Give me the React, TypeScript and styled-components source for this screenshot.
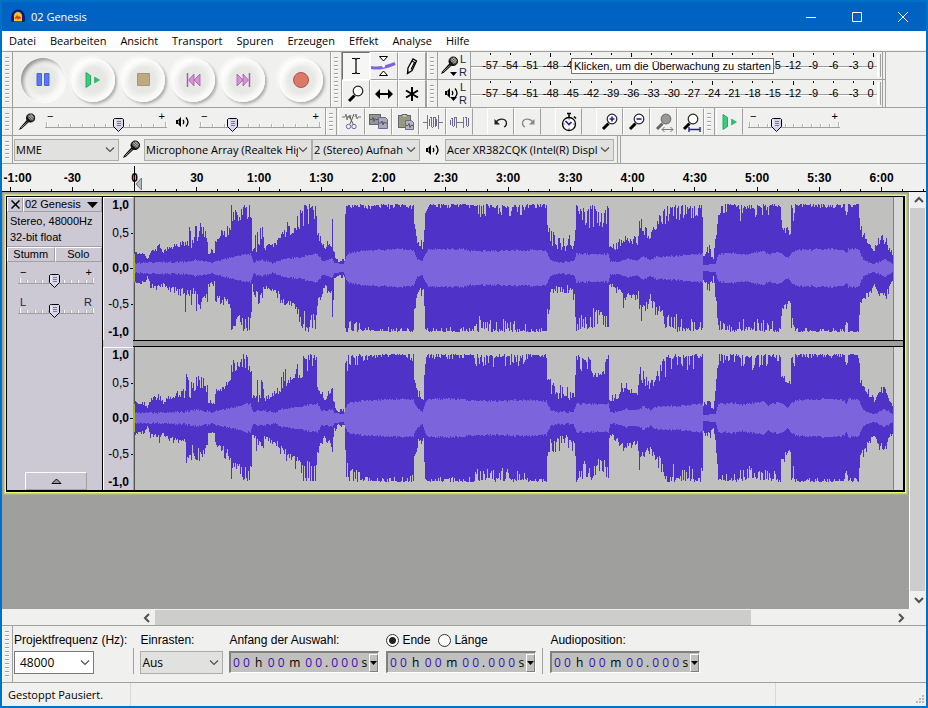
import React, { useState } from "react";
import styled, { createGlobalStyle, css } from "styled-components";

const ui = `"Open Sans", "Noto Sans", sans-serif`;
const arial = `"Liberation Sans", Arial, sans-serif`;
const line = "#a0a0a0";
const face = "#f0f0ee";
const panelTint = "#ccc8d4";

const GlobalStyle = createGlobalStyle`
  *, *::before, *::after { box-sizing: border-box; }
  body { margin: 0; background: #0072c6; }
  button, input, select { font: inherit; color: inherit; margin: 0; padding: 0; border: 0; border-radius: 0; background: none; }
  svg { display: block; flex: none; }
`;

/* ---------- window frame ---------- */

const Window = styled.div`
  display: flex;
  flex-direction: column;
  min-height: 100vh;
  border: solid #0072c6;
  border-width: 0 2px 2px;
  background: ${face};
  font: 12px/16px ${arial};
  color: #000;
  overflow: hidden;
`;

const TitleBar = styled.header`
  display: flex;
  align-items: center;
  height: 31px;
  padding-left: 9px;
  border-top: 2px solid #0072c6;
  background: #0063c3;
  color: #fff;
  font: 11px/16px ${ui};
`;

const Title = styled.h1`
  flex: 1;
  margin: 0 0 0 6px;
  font: inherit;
`;

const CaptionButton = styled.button`
  display: grid;
  place-items: center;
  width: 46px;
  height: 29px;
`;

const MenuBar = styled.nav`
  display: flex;
  gap: 14px;
  height: 20px;
  padding-left: 7px;
  background: #fff;
  border-bottom: 1px solid ${face};
  font: 11px/20px ${ui};
`;

/* ---------- toolbars ---------- */

const Dock = styled.div`
  display: flex;
  flex-direction: column;
`;

const DockRow = styled.div<{ $height: number }>`
  display: flex;
  height: ${(p) => p.$height}px;
  border-bottom: 1px solid ${line};
`;

const TopLine = styled.div`
  height: 1px;
  background: ${line};
`;

const Grip = styled.div`
  flex: none;
  width: 11px;
  border-right: 1px solid ${line};
  border-left: 1px solid #fff;
  padding: 5px 3px 4px 2px;
  background: repeating-linear-gradient(${line} 0 1px, #fff 1px 2px, transparent 2px 4px) content-box;
`;

const ToolbarEnd = styled.div`
  flex: none;
  width: 4px;
  border: solid ${line};
  border-width: 0 1px;
`;

const Transport = styled.div`
  display: flex;
  align-items: center;
  padding: 0 4px 0 5px;
  border-right: 1px solid ${line};
`;

const RoundButton = styled.button<{ $pressed?: boolean; $apart?: boolean }>`
  display: grid;
  place-items: center;
  width: 44px;
  height: 44px;
  margin: 0 3px;
  margin-left: ${(p) => (p.$apart ? 11 : 3)}px;
  border-radius: 50%;
  background: radial-gradient(circle at 50% 50%, #e7e7e5 0 12px, #f0f0ee 17px);
  ${(p) =>
    p.$pressed
      ? css`box-shadow: inset 3px 3px 4px -1px #8e8e8c, inset -4px -4px 4px #fafaf8, 1px 1px 2px #fff;`
      : css`box-shadow: inset 4px 4px 4px #fdfdfb, inset -3px -3px 4px #fcfcfa, 2px 2px 3px #acacaa, -2px -2px 3px #fafaf8;`}
`;

const ToolGrid = styled.div`
  display: grid;
  grid-template-columns: repeat(3, 28px);
  grid-auto-rows: 28px;
  border-right: 1px solid ${line};
`;

const ToolButton = styled.button<{ $active?: boolean }>`
  display: grid;
  place-items: center;
  border: 1px solid;
  border-color: ${(p) => (p.$active ? "#707070 #fff #fff #707070" : `#fff ${line} ${line} #fff`)};
  background: ${(p) => (p.$active ? "#f6f6f4" : face)};
`;

const Meters = styled.div`
  display: flex;
  flex-direction: column;
  flex: 1;
  min-width: 0;
  margin-right: 40px;
`;

const MeterRow = styled.div`
  position: relative;
  display: flex;
  height: 28px;
  & + & { border-top: 1px solid ${line}; }
`;

const MeterButton = styled.button`
  display: flex;
  align-items: center;
  width: 32px;
  padding-left: 1px;
`;

const ChannelNames = styled.span`
  display: flex;
  flex-direction: column;
  font: 11px/13px ${arial};
  color: #20283c;
`;

const Scale = styled.div`
  position: relative;
  display: flex;
  flex: 1;
  min-width: 0;
  padding-left: 9px;
  border-left: 1px solid ${line};
  background: linear-gradient(${line} 0 1px, #fff 1px 2px) 0 14px / 100% 2px no-repeat;
`;

const ScaleCells = styled.div`
  display: flex;
  flex: 1;
  min-width: 0;
  margin-right: -7px;
`;

const ScaleCell = styled.div`
  display: flex;
  flex: 1 1 0;
  min-width: 0;
  flex-direction: column;
  align-items: center;
  font: 11px/17px ${arial};
  white-space: nowrap;
  &:last-child span { padding-right: 7px; }
`;

const ScaleTick = styled.i<{ $long: boolean }>`
  width: 1px;
  height: ${(p) => (p.$long ? 4 : 2)}px;
  margin: ${(p) => (p.$long ? "1px 0 0" : "1px 0 2px")};
  background: #000;
`;

const MeterCap = styled.div`
  flex: none;
  width: 5px;
  margin: 2px 0;
  border-left: 2px solid #fff;
  background: linear-gradient(${line}, ${line}) 1px 0 / 1px 100% no-repeat;
`;

const MeterIcon = styled.span`
  display: flex;
  flex-direction: column;
  align-items: end;
  width: 20px;
  svg + svg { margin: -3px 2px 0 0; }
`;

const Tooltip = styled.div`
  position: absolute;
  top: 6px;
  left: 100px;
  height: 16px;
  padding: 0 2px;
  border: 1px solid #767676;
  background: #fff;
  font: 11px/14px ${arial};
  white-space: nowrap;
`;

const Mixer = styled.div`
  display: flex;
  align-items: center;
  gap: 9px;
  padding: 0 4px 0 5px;
  border-right: 1px solid ${line};
`;

const ButtonStrip = styled.div`
  display: flex;
  padding-left: 1px;
`;

const EditButton = styled.button<{ $apart?: boolean }>`
  display: grid;
  place-items: center;
  width: 27px;
  height: 27px;
  margin-left: ${(p) => (p.$apart ? 14 : 0)}px;
  border: 1px solid;
  border-color: #fff ${line} transparent #fff;
`;

const Speed = styled.div`
  display: flex;
  align-items: center;
  padding-left: 5px;
`;

/* ---------- sliders ---------- */

const knob = `url("data:image/svg+xml,%3Csvg xmlns='http://www.w3.org/2000/svg' width='12' height='14'%3E%3Cpath d='M2.5.5h7l1 1v7l-5 5-5-5v-7l1-1z' fill='%23d8d4ea' stroke='%23000'/%3E%3Cpath d='M2 2v6' stroke='%23fff'/%3E%3Cpath d='M4 3.500h4M4 5.500h4M4 7.500h4' stroke='%23807c98'/%3E%3C/svg%3E")`;

const SliderBox = styled.div<{ $width: number }>`
  display: grid;
  width: ${(p) => p.$width}px;
  height: 22px;
  > * { grid-area: 1 / 1; }
`;

const SliderEnds = styled.span<{ $color: string }>`
  display: flex;
  justify-content: space-between;
  height: 11px;
  padding: 0 2px;
  font: 11px/10px ${arial};
  color: ${(p) => p.$color};
`;

const TickRow = styled.span`
  display: flex;
  align-items: end;
  align-self: end;
  justify-content: space-between;
  height: 7px;
  margin-bottom: 5px;
  padding: 0 1px;
  border-bottom: 1px solid ${line};
  i { width: 1px; height: 3px; background: #b4b4b4; box-shadow: 1px 0 #fff; }
  i:first-child, i:last-child { height: 5px; }
`;

const Range = styled.input`
  align-self: end;
  width: 100%;
  height: 14px;
  margin-bottom: 1px;
  appearance: none;
  &::-webkit-slider-thumb {
    appearance: none;
    width: 12px;
    height: 14px;
    background: ${knob} no-repeat;
  }
`;

type SliderProps = { label: string; width: number; value: number; ends?: [string, string]; color?: string };

function Slider({ label, width, value, ends = ["−", "+"], color = "#000" }: SliderProps) {
  return (
    <SliderBox $width={width}>
      <SliderEnds $color={color}>
        <span>{ends[0]}</span>
        <span>{ends[1]}</span>
      </SliderEnds>
      <TickRow aria-hidden>
        {Array.from({ length: 11 }, (_, i) => <i key={i} />)}
      </TickRow>
      <Range type="range" aria-label={label} defaultValue={value} />
    </SliderBox>
  );
}

/* ---------- drop-downs ---------- */

const SelectBox = styled.div<{ $width: number; $large?: boolean; $white?: boolean }>`
  display: grid;
  align-items: center;
  flex: none;
  width: ${(p) => p.$width}px;
  height: ${(p) => (p.$large ? 23 : 22)}px;
  border: 1px solid ${(p) => (p.$white ? "#7a7a7a" : "#adadad")};
  background: ${(p) => (p.$white ? "#fff" : "#e1e1e0")};
  font: ${(p) => (p.$large ? 12 : 11)}px/16px ${ui};
  > * { grid-area: 1 / 1; }
  > svg { justify-self: end; margin-right: 3px; pointer-events: none; }
`;

const Select = styled.select`
  appearance: none;
  width: calc(100% - 13px);
  height: 100%;
  padding-left: 1px;
  outline: 0;
  overflow: hidden;
`;

const ComboInput = styled.input`
  width: calc(100% - 20px);
  padding-left: 5px;
`;

const Chevron = ({ d = "M1 2.500l4 4 4-4" }) => (
  <svg width="10" height="10" viewBox="0 0 10 10" fill="none" stroke="#505050" strokeWidth="1.2"><path d={d} /></svg>
);

const ScrollChevron = ({ d }: { d: string }) => (
  <svg width="10" height="10" viewBox="0 0 10 10" fill="none" stroke="#505050" strokeWidth="2"><path d={d} /></svg>
);

function Drop({ label, value, width, large, id }: { label?: string; value: string; width: number; large?: boolean; id?: string }) {
  return (
    <SelectBox $width={width} $large={large}>
      <Select id={id} aria-label={label} defaultValue={value}>
        <option>{value}</option>
      </Select>
      <Chevron />
    </SelectBox>
  );
}

const Devices = styled.div`
  display: flex;
  align-items: center;
  padding: 0 3px 0 1px;
`;

const DeviceIcon = styled.span<{ $width: number }>`
  display: grid;
  place-items: center;
  width: ${(p) => p.$width}px;
`;

/* ---------- timeline ---------- */

const Timeline = styled.div`
  position: relative;
  height: 28px;
  border-bottom: 1px solid #000;
  overflow: hidden;
`;

const TimelineCells = styled.div`
  display: flex;
  height: 100%;
  margin: 0 -49px 0 -23px;
`;

const TimelineCell = styled.div`
  display: grid;
  flex: 1 1 0;
  grid-template: 22px 5px / repeat(3, 1fr);
  justify-items: center;
  align-items: end;
  b { grid-column: 1 / 4; font: bold 12px/16px ${arial}; }
  &:first-child b { padding-left: 15px; }
  i { width: 1px; height: 2px; background: #000; }
  i:nth-of-type(2) { height: 4px; }
`;

const PlayHead = styled.svg`
  position: absolute;
  left: 132px;
  top: 2px;
`;

/* ---------- tracks ---------- */

const Workspace = styled.main`
  display: flex;
  flex: 1;
`;

const TrackPanel = styled.div`
  flex: 1;
  min-width: 0;
  padding: 4px;
  background: #9f9f9d;
`;

const Track = styled.section`
  display: flex;
  border: solid #000;
  border-width: 1px 2px 2px 1px;
  box-shadow: 0 0 0 1px #e6fd70, 0 0 0 2px #c6cf84, 0 0 0 3px #adb08e;
`;

const TrackControls = styled.div`
  display: flex;
  flex-direction: column;
  flex: none;
  width: 96px;
  border-right: 1px solid #000;
  background: ${panelTint};
`;

const ControlRow = styled.div`
  display: flex;
`;

const PanelButton = styled.button<{ $width?: number }>`
  display: flex;
  align-items: center;
  justify-content: center;
  flex: ${(p) => (p.$width ? `0 0 ${p.$width}px` : "1")};
  height: 15px;
  border: 1px solid;
  border-color: #fff ${line} ${line} #fff;
  font: 11px/13px ${arial};
  white-space: nowrap;
`;

const TrackName = styled(PanelButton)`
  justify-content: space-between;
  padding: 0 3px 0 1px;
`;

const TrackInfo = styled.p`
  margin: 0;
  padding: 1px 3px;
  font: 11px/16px ${arial};
  border-bottom: 1px solid ${line};
`;

const TrackSliders = styled.div`
  display: flex;
  flex-direction: column;
  gap: 8px;
  flex: 1;
  padding: 5px 0 0 11px;
`;

const CollapseButton = styled(PanelButton)`
  flex: 0 0 18px;
  width: 62px;
  margin: 0 auto 0 18px;
`;

const Channels = styled.div`
  display: flex;
  flex: 1;
  min-width: 0;
  flex-direction: column;
`;

const Channel = styled.div`
  display: flex;
  height: 143px;
`;

const ChannelGap = styled.div`
  height: 7px;
  margin-left: 30px;
  border: solid #000;
  border-width: 1px 0;
  background: #9f9f9d;
`;

const ChannelStack = styled.div`
  display: flex;
  flex-direction: column;
  background: ${panelTint};
`;

const VRuler = styled.div`
  display: grid;
  grid-template-rows: 20px 30px 40px 32px 19px;
  flex: none;
  width: 31px;
  border: solid #fff;
  border-width: 1px 0 0 1px;
  border-right: 1px solid ${line};
`;

const VMark = styled.div<{ $place: string; $bold: boolean; $tick: number }>`
  display: flex;
  align-items: center;
  align-self: ${(p) => p.$place};
  justify-content: flex-end;
  gap: 1px;
  height: 14px;
  font: ${(p) => (p.$bold ? "bold" : "normal")} 12px/14px ${arial};
  &::after { content: ""; width: ${(p) => p.$tick}px; height: 1px; margin-left: ${(p) => 3 - p.$tick}px; background: #000; }
`;

const Lane = styled.div`
  flex: 1;
  min-width: 0;
  border-left: 1px solid;
  border-image: linear-gradient(#555 0 57px, #a4b820 57px 85px, #555 85px) 1;
  background: #c0c0be;
`;

const WaveSvg = styled.svg`
  width: 100%;
  height: 143px;
`;

const LaneTail = styled.div`
  flex: none;
  width: 10px;
  border-left: 1px solid #808080;
  background: #d8d8d8;
`;

/* Envelope key points: column, lowest peak, highest peak. */
const peaks: number[][] = [
  [0, 14, 17], [9, 13, 16], [12, 7, 10], [15, 15, 20], [24, 17, 25], [28, 14, 17], [34, 18, 24], [46, 20, 28], [48, 20, 29],
  [49, 20, 46], [58, 18, 42], [64, 30, 48], [70, 26, 38], [72, 22, 36], [73, 14, 20], [79, 13, 18], [80, 24, 34], [92, 30, 43],
  [95, 38, 46], [96, 44, 64], [104, 46, 53], [107, 46, 64], [114, 48, 64], [116, 42, 52], [117, 16, 20], [122, 16, 42],
  [127, 18, 42], [129, 16, 21], [135, 20, 26], [144, 23, 32], [148, 30, 52], [155, 32, 42], [162, 38, 55], [169, 40, 64],
  [181, 44, 64], [182, 30, 38], [186, 22, 30], [189, 16, 22], [194, 22, 30], [196, 20, 30], [197, 24, 50], [199, 10, 16],
  [202, 6, 9], [209, 6, 10], [210, 30, 64], [213, 46, 64], [224, 52, 64], [230, 58, 63], [245, 59, 64], [272, 59, 64], [278, 56, 64],
  [279, 38, 44], [283, 20, 28], [288, 18, 28], [290, 50, 62], [292, 59, 64], [338, 59, 64], [342, 48, 64], [388, 52, 64],
  [394, 60, 64], [411, 60, 64], [412, 38, 50], [415, 20, 40], [420, 18, 34], [433, 16, 34], [439, 20, 34], [441, 54, 64],
  [450, 40, 60], [458, 38, 64], [465, 40, 54], [473, 44, 64], [474, 15, 22], [482, 18, 26], [489, 26, 44], [494, 24, 30],
  [503, 22, 34], [504, 36, 58], [510, 32, 44], [515, 26, 36], [520, 36, 48], [528, 38, 60], [532, 44, 64], [567, 48, 64],
  [568, 11, 14], [573, 14, 26], [578, 8, 13], [580, 20, 30], [583, 52, 64], [597, 58, 64], [605, 46, 64], [618, 48, 63],
  [630, 52, 64], [645, 52, 64], [646, 40, 48], [653, 30, 40], [655, 34, 38], [656, 58, 64], [658, 40, 60], [660, 60, 64],
  [709, 60, 64], [711, 50, 56], [713, 60, 64], [723, 59, 64], [725, 34, 46], [733, 22, 30], [739, 16, 20], [743, 24, 32],
  [750, 24, 34], [754, 16, 24], [758, 10, 13],
];

/* Inner level: column, height. */
const levels: number[][] = [
  [0, 5], [48, 6], [60, 8], [72, 7], [76, 5], [80, 7], [95, 10], [110, 14], [115, 14], [118, 6], [127, 8], [138, 5], [148, 9],
  [165, 11], [178, 14], [182, 14], [187, 7], [197, 9], [199, 5], [208, 4], [212, 14], [222, 17], [262, 19], [278, 18], [282, 9],
  [287, 7], [290, 14], [293, 19], [328, 19], [335, 17], [362, 17], [385, 18], [397, 18], [411, 17], [415, 8], [423, 6], [438, 6],
  [441, 14], [473, 14], [475, 6], [482, 6], [490, 9], [503, 8], [508, 12], [515, 8], [520, 11], [540, 12], [567, 14], [568, 3],
  [580, 4], [583, 14], [600, 15], [607, 13], [628, 17], [633, 13], [643, 16], [653, 10], [655, 13], [660, 18], [697, 19],
  [708, 18], [711, 14], [713, 19], [723, 19], [728, 8], [738, 4], [750, 9], [758, 3],
];

const laneWidth = 758;
const laneMiddle = 71;

function sample(keys: number[][], x: number, field: number) {
  let i = 1;
  while (i < keys.length - 1 && keys[i][0] < x) i++;
  const a = keys[i - 1];
  const b = keys[i];
  const t = Math.min(1, Math.max(0, (x - a[0]) / (b[0] - a[0])));
  return a[field] + (b[field] - a[field]) * t;
}

function buildWave(seed: number) {
  let state = seed;
  const random = () => {
    state = (state * 1664525 + 1013904223) % 4294967296;
    return state / 4294967296;
  };
  /* Saturated passages stay near the ceiling with rare dips; others stay low with rare spikes. */
  const drop = (loud: boolean) => {
    const spike = random() < 0.3;
    const r = random();
    if (loud) return spike ? 0.5 + r * 0.5 : r * 0.3;
    return spike ? r * 0.3 : 0.5 + r * 0.5;
  };
  let outer = "";
  let inner = "";
  for (let x = 0; x < laneWidth; x++) {
    const lo = sample(peaks, x, 1);
    const hi = sample(peaks, x, 2);
    const up = Math.round(hi - (hi - lo) * drop(hi > 60));
    const down = Math.round(hi - (hi - lo) * drop(hi > 60));
    outer += `M${x} ${laneMiddle - up}h1v${up + down}h-1z`;
    const core = sample(levels, x, 1);
    const wobble = core > 5 ? random() * 2 - 1 : 0;
    const r = Math.round(core + wobble);
    inner += `M${x} ${laneMiddle - r}h1v${r * 2}h-1z`;
  }
  return { outer, inner };
}

const waves = [buildWave(7), buildWave(91)];

function Wave({ index }: { index: number }) {
  return (
    <WaveSvg viewBox={`0 0 ${laneWidth} 143`} preserveAspectRatio="none" shapeRendering="crispEdges" aria-hidden>
      <path d={waves[index].outer} fill="#4f32c8" />
      <path d={waves[index].inner} fill="#7c64dc" />
    </WaveSvg>
  );
}

/* ---------- scroll bars ---------- */

const VScroll = styled.div`
  display: flex;
  flex-direction: column;
  width: 17px;
  border-left: 1px solid #fff;
`;

const HScroll = styled.div`
  display: flex;
  height: 17px;
  padding: 1px 17px 0 136px;
  border-bottom: 1px solid ${line};
`;

const ScrollArrow = styled.button`
  display: grid;
  place-items: center;
  flex: none;
  width: 17px;
  height: 16px;
`;

const ScrollThumb = styled.div<{ $grow: number }>`
  flex: ${(p) => p.$grow} 1 0;
  background: #cdcdcb;
`;

const VThumb = styled(ScrollThumb)`
  margin: 0 1px 2px 0;
`;

const ScrollRest = styled.div<{ $grow: number }>`
  flex: ${(p) => p.$grow} 1 0;
`;

/* ---------- selection bar ---------- */

const SelectionBar = styled.section`
  display: flex;
  height: 57px;
  border-bottom: 1px solid ${line};
`;

const Field = styled.div<{ $gap?: number }>`
  display: flex;
  flex-direction: column;
  gap: 3px;
  padding-top: 6px;
  margin-left: ${(p) => p.$gap ?? 7}px;
`;

const FieldLabel = styled.label`
  font: 12px/16px ${arial};
  white-space: nowrap;
`;

const Divider = styled.div`
  width: 1px;
  margin: 22px 0 8px 6px;
  background: ${line};
`;

const Radios = styled.div`
  display: flex;
  gap: 8px;
  height: 16px;
`;

const RadioLabel = styled.label`
  display: flex;
  align-items: center;
  gap: 3px;
`;

const Radio = styled.input`
  appearance: none;
  width: 13px;
  height: 13px;
  border: 1px solid #333;
  border-radius: 50%;
  background: #fff;
  &:checked { background: radial-gradient(circle, #222 0 3px, #fff 4px); }
`;

const TimeBox = styled.div`
  display: flex;
  align-items: center;
  width: 150px;
  height: 22px;
  border: solid;
  border-width: 2px 1px 1px 2px;
  border-color: #808080 #fff #fff #808080;
  background: #c0c0be;
  font: 12px/16px ${ui};
`;

const Digit = styled.input`
  width: 10px;
  text-align: center;
  color: #3a10b8;
`;

const Unit = styled.span<{ $width: number }>`
  width: ${(p) => p.$width}px;
  text-align: center;
`;

const TimeMenu = styled.button`
  display: grid;
  place-items: center;
  width: 9px;
  height: 18px;
  margin-left: auto;
  border: 1px solid;
  border-color: #fff #808080 #808080 #fff;
`;

const StatusBar = styled.footer`
  display: flex;
  height: 23px;
  margin-left: 1px;
  font: 11px/24px ${ui};
`;

const StatusCell = styled.div<{ $grow: string }>`
  flex: ${(p) => p.$grow};
  padding-left: 5px;
  border-right: 1px solid #d8d8d6;
  &:last-child { display: flex; align-items: end; justify-content: end; border: 0; }
`;

function TimeField({ label }: { label: string }) {
  const digits = (prefix: string, n: number) =>
    Array.from({ length: n }, (_, i) => (
      <Digit key={i} defaultValue="0" maxLength={1} aria-label={`${label} ${prefix} ${i + 1}`} />
    ));
  return (
    <TimeBox role="group" aria-label={label}>
      {digits("Stunden", 2)}
      <Unit $width={15}>h</Unit>
      {digits("Minuten", 2)}
      <Unit $width={18}>m</Unit>
      {digits("Sekunden", 2)}
      <Unit $width={6}>.</Unit>
      {digits("Millisekunden", 3)}
      <Unit $width={10}>s</Unit>
      <TimeMenu aria-label={`${label} Format`}><Down /></TimeMenu>
    </TimeBox>
  );
}

/* ---------- icons ---------- */

const Logo = () => (
  <svg width="14" height="15" viewBox="0 0 14 15">
    <path d="M1.500 9V7a5.500 5.500 0 0 1 11 0v2" fill="none" stroke="#0a1060" strokeWidth="2" />
    <path d="M3 12V7.500C3 4.500 5 3 7 3s4 1.500 4 4.500V12z" fill="#f8c020" />
    <path d="M4 9h1l1-1.500L7 9.500 8 8l1 1h1" stroke="#f03010" strokeWidth="1.500" fill="none" />
    <rect x="0" y="7" width="3" height="6" rx="1.500" fill="#14187c" />
    <rect x="11" y="7" width="3" height="6" rx="1.500" fill="#14187c" />
  </svg>
);

const Mic = ({ size = 20 }) => (
  <svg width={size} height={size} viewBox="0 0 20 20">
    <path d="M1 19l1.500-3L11 6.500l2.500 2.500L4 17.500z" fill="#000" />
    <path d="M3.500 16.500l7.500-7" stroke="#aaa" />
    <circle cx="14" cy="5.500" r="4.500" fill="#444" stroke="#000" />
    <path d="M11.500 4.500l4-2.500M11.500 7l5-4M13.500 8l4-3.500M12 2.500l4.500 5M14 1.500l3.500 4M11 5l3 4" stroke="#d8d8d8" strokeWidth=".7" />
    <path d="M9.500 5l5 5" stroke="#000" strokeWidth="1.500" />
  </svg>
);

const Speaker = () => (
  <svg width="14" height="14" viewBox="0 0 14 14" fill="none" stroke="#000">
    <path d="M0 5h2l3-3v10L2 9H0z" fill="#000" stroke="none" />
    <path d="M2.500 5.500v3" stroke="#aaa" />
    <path d="M7 5c1 1.300 1 2.700 0 4M10 2.500c2.700 3 2.700 6 0 9" strokeWidth="1.300" />
  </svg>
);

const Lens = ({ fill = "#fff", children }: { fill?: string; children?: React.ReactNode }) => (
  <svg width="20" height="20" viewBox="0 0 20 20">
    <path d="M3 17l5.500-5.500" stroke={fill === "#fff" ? "#000" : "#666"} strokeWidth="3" />
    <circle cx="12" cy="7" r="4.800" fill={fill} stroke={fill === "#fff" ? "#222" : "#777"} strokeWidth="1.200" />
    {children}
  </svg>
);

const Down = () => <svg width="7" height="4"><path d="M0 0h7L3.500 4z" /></svg>;

const PlayGlyph = () => (
  <svg width="16" height="16" viewBox="0 0 16 16">
    <path d="M1 .5l4.500 3v9l-4.500 3z" fill="#34d07c" stroke="#28a866" />
    <path d="M9.500 5l5 3-5 3z" fill="#28c070" stroke="#28a866" strokeWidth=".6" />
  </svg>
);

const SkipGlyph = ({ flip }: { flip?: boolean }) => (
  <svg width="15" height="14" viewBox="0 0 15 14">
    <g fill="#d890d8" stroke="#a060a8" strokeWidth=".8" transform={flip ? "matrix(-1 0 0 1 15 0)" : undefined}>
      <path d="M1.500 0v14" strokeWidth="1.500" />
      <path d="M8 1v12L2.500 7zM14 1v12L8 7z" />
    </g>
  </svg>
);

const CutIcon = () => (
  <svg width="19" height="19" viewBox="0 0 19 19" fill="none" stroke="#777">
    <path d="M0 5h3l1-3 1 6 1-4 1 2h1l1-3M13 5l1-3 1 5 1-2h3" />
    <path d="M7 3l4 9M12 2l-4 10" stroke="#555" />
    <circle cx="6.500" cy="14.500" r="2.200" stroke="#6a66a8" /><circle cx="12" cy="14.500" r="2.200" stroke="#6a66a8" />
  </svg>
);

const CopyIcon = () => (
  <svg width="20" height="17" viewBox="0 0 20 17">
    <rect x=".5" y="1.500" width="11" height="10" fill="#959595" stroke="#666" />
    <path d="M1 6.500h2l1-2 1 4 1-3 1 1h2" stroke="#555" fill="none" />
    <path d="M9.500 4.500h7l2 2v9h-9z" fill="#aaaab4" stroke="#6a66a0" />
    <path d="M10 10h2l1-2 1 4 1-3 1 1h2" stroke="#555" fill="none" />
  </svg>
);

const PasteIcon = () => (
  <svg width="18" height="18" viewBox="0 0 18 18">
    <rect x="1.500" y="2.500" width="12" height="12" fill="#98987c" stroke="#666" />
    <path d="M5 3.500V1.500h5v2" stroke="#666" fill="#c8c8c0" />
    <path d="M8.500 7.500h6l2 2v7h-8z" fill="#b4b4bc" stroke="#6a66a0" />
    <path d="M9 12.500h2l1-2 1 4 1-2h2" stroke="#555" fill="none" />
  </svg>
);

const TrimIcon = () => (
  <svg width="20" height="18" viewBox="0 0 20 18" fill="none" stroke="#6a66a0">
    <path d="M0 9.500h4M16 9.500h4M4.500 2v14M15.500 2v14" stroke="#777" />
    <path d="M6.500 13V6M7 4.500h1M8.500 4v10M9 14.500h1M10.500 14V4M11 4.500h1M12.500 4v10M13.500 13V6" />
  </svg>
);

const SilenceIcon = () => (
  <svg width="20" height="18" viewBox="0 0 20 18" fill="none" stroke="#6a66a0">
    <path d="M.5 12V7M1 5.500h1M2.500 5v8M3 13.500h1M4.500 13V4M5 4.500h1M15 4.500h1M16.500 4v9M17 13.500h1M18.500 13V5" />
    <path d="M7 9.500h6M6.500 4v11M13.500 4v11" stroke="#777" />
  </svg>
);

const Turn = ({ flip }: { flip?: boolean }) => (
  <svg width="16" height="14" viewBox="0 0 16 14">
    <g transform={flip ? "matrix(-1 0 0 1 16 0)" : undefined} stroke={flip ? "#888" : "#222"} fill="none">
      <path d="M3 7c3-4 10-4 10.500 1 0 2-1 3.500-2.500 4" strokeWidth="1.300" />
      <path d="M1.500 4v5.500H7z" fill={flip ? "#888" : "#222"} stroke="none" />
    </g>
  </svg>
);

const Stopwatch = () => (
  <svg width="18" height="20" viewBox="0 0 18 20" fill="none" stroke="#000">
    <circle cx="9" cy="12" r="6.500" strokeWidth="1.300" fill="#fff" />
    <path d="M7 1.500h4M9 1.500v4M14 4.500l2 2" strokeWidth="1.500" />
    <path d="M5.500 9L9 12.500 11.500 10" stroke="#2818a8" strokeWidth="1.700" />
    <path d="M9 6.500v1M9 16.500v1M3.500 12h1M13.500 12h1" />
  </svg>
);

/* ---------- content ---------- */

const menus = ["Datei", "Bearbeiten", "Ansicht", "Transport", "Spuren", "Erzeugen", "Effekt", "Analyse", "Hilfe"];
const times = ["-1:00", "-30", "0", "30", "1:00", "1:30", "2:00", "2:30", "3:00", "3:30", "4:00", "4:30", "5:00", "5:30", "6:00", ""];
const decibels = Array.from({ length: 20 }, (_, i) => i * 3 - 57);

const marks = [
  { text: "1,0", place: "start", bold: true, tick: 0 },
  { text: "0,5", place: "center", bold: false, tick: 2 },
  { text: "0,0", place: "center", bold: true, tick: 3 },
  { text: "-0,5", place: "center", bold: false, tick: 2 },
  { text: "-1,0", place: "end", bold: true, tick: 0 },
];

/* While its hint is open, a meter leaves out the labels that the hint covers. */
const underHint = (db: number) => db > -45 && db < -15;

function Meter({ label, icon, hint }: { label: string; icon: React.ReactNode; hint?: string }) {
  return (
    <MeterRow>
      <Grip />
      <MeterButton aria-label={label}>
        {icon}
        <ChannelNames><span>L</span><span>R</span></ChannelNames>
      </MeterButton>
      <Scale>
        <ScaleCells>
          {decibels.map((db) => (
            <ScaleCell key={db}>
              <ScaleTick $long={db % 12 === 0} />
              {!(hint && underHint(db)) && <span>{db}</span>}
            </ScaleCell>
          ))}
        </ScaleCells>
        {hint && <Tooltip role="tooltip">{hint}</Tooltip>}
      </Scale>
      <MeterCap />
      <ToolbarEnd />
    </MeterRow>
  );
}

export default function App() {
  const [end, setEnd] = useState("Ende");
  return (
    <>
      <GlobalStyle />
      <Window>
        <TitleBar>
          <Logo />
          <Title>02 Genesis</Title>
          <CaptionButton aria-label="Minimieren"><svg width="10" height="10" stroke="#fff"><path d="M0 5.500h10" /></svg></CaptionButton>
          <CaptionButton aria-label="Maximieren"><svg width="10" height="10" fill="none" stroke="#fff"><path d="M.5.500h9v9h-9z" /></svg></CaptionButton>
          <CaptionButton aria-label="Schließen"><svg width="10" height="10" stroke="#fff"><path d="M0 0l10 10M10 0L0 10" /></svg></CaptionButton>
        </TitleBar>
        <MenuBar>
          {menus.map((m) => <button key={m}>{m}</button>)}
        </MenuBar>

        <Dock>
          <TopLine />
          <DockRow $height={56}>
            <Grip />
            <Transport>
              <RoundButton $pressed aria-label="Pause"><svg width="14" height="13"><path d="M1 .5h4.500v12H1zM8.500.5H13v12H8.500z" fill="#5878f8" stroke="#4860e0" /></svg></RoundButton>
              <RoundButton aria-label="Wiedergabe"><PlayGlyph /></RoundButton>
              <RoundButton aria-label="Stopp"><svg width="13" height="13"><path d="M.5.500h12v12H.5z" fill="#bcaa80" stroke="#a89870" /></svg></RoundButton>
              <RoundButton aria-label="Zum Anfang"><SkipGlyph /></RoundButton>
              <RoundButton aria-label="Zum Ende"><SkipGlyph flip /></RoundButton>
              <RoundButton $apart aria-label="Aufnahme"><svg width="16" height="16"><circle cx="8" cy="8" r="7.500" fill="#dc7868" stroke="#a85850" /></svg></RoundButton>
            </Transport>
            <Grip />
            <ToolGrid>
              <ToolButton $active aria-label="Auswahlwerkzeug"><svg width="10" height="18" fill="none" stroke="#000" strokeWidth="1.200"><path d="M1 1.500h3l1 1 1-1h3M5 2v14M1 16.500h3l1-1 1 1h3" /></svg></ToolButton>
              <ToolButton aria-label="Hüllkurvenwerkzeug">
                <svg width="26" height="22" viewBox="0 0 26 22">
                  <path d="M0 12.500c8 1.500 14 0 24-4" stroke="#7c64dc" strokeWidth="3" fill="none" />
                  <path d="M8.500 1.500h8L12.500 6zM8.500 20.500h8L12.500 16z" fill="#fff" stroke="#000" />
                  <circle cx="12.500" cy="11" r="1.500" fill="#fff" />
                </svg>
              </ToolButton>
              <ToolButton aria-label="Zeichenwerkzeug"><svg width="12" height="18" viewBox="0 0 12 18" stroke="#000"><path d="M2 11L7 2l3.500 2L6 13.500l-4.500 3z" fill="#fff" strokeWidth="1.300" /><path d="M6 4l3.500 2M5 12.500l3.500-7M1.500 16.500l.5-3" strokeWidth="1.200" /></svg></ToolButton>
              <ToolButton aria-label="Zoomwerkzeug"><Lens /></ToolButton>
              <ToolButton aria-label="Verschiebewerkzeug"><svg width="18" height="10"><path d="M0 5l5-5v4h8V0l5 5-5 5V6H5v4z" /></svg></ToolButton>
              <ToolButton aria-label="Multi-Werkzeug"><svg width="14" height="16" stroke="#000" strokeWidth="2"><path d="M7 1v14M1 4.500l12 7M13 4.500l-12 7" /></svg></ToolButton>
            </ToolGrid>
            <Meters>
              <Meter
                label="Aufnahmepegel"
                icon={<MeterIcon><Mic size={19} /><Down /></MeterIcon>}
                hint="Klicken, um die Überwachung zu starten"
              />
              <Meter label="Wiedergabepegel" icon={<MeterIcon><Speaker /><Down /></MeterIcon>} />
            </Meters>
          </DockRow>

          <DockRow $height={28}>
            <Grip />
            <Mixer>
              <Mic size={18} />
              <Slider label="Aufnahmelautstärke" width={122} value={62} />
              <Speaker />
              <Slider label="Wiedergabelautstärke" width={122} value={25} />
            </Mixer>
            <Grip />
            <ButtonStrip>
              <EditButton aria-label="Ausschneiden"><CutIcon /></EditButton>
              <EditButton aria-label="Kopieren"><CopyIcon /></EditButton>
              <EditButton aria-label="Einfügen"><PasteIcon /></EditButton>
              <EditButton aria-label="Trimmen"><TrimIcon /></EditButton>
              <EditButton aria-label="Stille"><SilenceIcon /></EditButton>
              <EditButton $apart aria-label="Rückgängig"><Turn /></EditButton>
              <EditButton aria-label="Wiederholen"><Turn flip /></EditButton>
              <EditButton $apart aria-label="Sync-Lock"><Stopwatch /></EditButton>
              <EditButton $apart aria-label="Einzoomen"><Lens><path d="M9.500 7h5M12 4.500v5" stroke="#2818a8" strokeWidth="1.600" /></Lens></EditButton>
              <EditButton aria-label="Auszoomen"><Lens><path d="M9.500 7h5" stroke="#2818a8" strokeWidth="1.600" /></Lens></EditButton>
              <EditButton aria-label="Auswahl einpassen"><Lens fill="#999"><path d="M8 17.500h11M10.500 15L8 17.500l2.500 2.500M16.500 15l2.500 2.500-2.500 2.500" stroke="#777" fill="none" /></Lens></EditButton>
              <EditButton aria-label="Projekt einpassen"><Lens><path d="M8 17.500h11M8 15v5M19 15v5" stroke="#2818a8" strokeWidth="1.400" /></Lens></EditButton>
            </ButtonStrip>
            <Grip />
            <ButtonStrip>
              <EditButton aria-label="Mit Geschwindigkeit abspielen"><PlayGlyph /></EditButton>
            </ButtonStrip>
            <Speed><Slider label="Abspielgeschwindigkeit" width={92} value={29} /></Speed>
          </DockRow>

          <DockRow $height={28}>
            <Grip />
            <Devices>
              <Drop label="Audio-Host" value="MME" width={105} />
              <DeviceIcon $width={25}><Mic size={19} /></DeviceIcon>
              <Drop label="Aufnahmegerät" value="Microphone Array (Realtek Hig" width={168} />
              <Drop label="Aufnahmekanäle" value="2 (Stereo) Aufnah" width={108} />
              <DeviceIcon $width={25}><Speaker /></DeviceIcon>
              <Drop label="Wiedergabegerät" value="Acer XR382CQK (Intel(R) Displ" width={169} />
            </Devices>
            <ToolbarEnd />
          </DockRow>
        </Dock>

        <Timeline>
          <TimelineCells>
            {times.map((t) => (
              <TimelineCell key={t}><b>{t}</b><i /><i /><i /></TimelineCell>
            ))}
          </TimelineCells>
          <PlayHead width="9" height="26"><path d="M.5 0v26" stroke="#000" /><path d="M7.500 12v12L2 18z" fill="#b8b8b8" stroke="#777" /></PlayHead>
        </Timeline>

        <Workspace>
          <TrackPanel>
            <Track aria-label="02 Genesis">
              <TrackControls>
                <ControlRow>
                  <PanelButton $width={16} aria-label="Spur schließen"><svg width="9" height="9" stroke="#000" strokeWidth="1.500"><path d="M.5.500l8 8M8.500.500l-8 8" /></svg></PanelButton>
                  <TrackName>02 Genesis<svg width="11" height="6"><path d="M0 0h11L5.500 6z" /></svg></TrackName>
                </ControlRow>
                <TrackInfo>Stereo, 48000Hz<br />32-bit float</TrackInfo>
                <ControlRow>
                  <PanelButton>Stumm</PanelButton>
                  <PanelButton>Solo</PanelButton>
                </ControlRow>
                <TrackSliders>
                  <Slider label="Verstärkung" width={76} value={48} />
                  <Slider label="Balance" width={76} value={48} ends={["L", "R"]} color="#20283c" />
                </TrackSliders>
                <CollapseButton aria-label="Einklappen"><svg width="11" height="6"><path d="M1 5.500h9L5.500 1z" fill="#999" stroke="#000" /></svg></CollapseButton>
              </TrackControls>
              <Channels>
                {[0, 1].map((c) => (
                  <ChannelStack key={c}>
                    {c === 1 && <ChannelGap />}
                    <Channel>
                      <VRuler>
                        {marks.map((m) => (
                          <VMark key={m.text} $place={m.place} $bold={m.bold} $tick={m.tick}>{m.text}</VMark>
                        ))}
                      </VRuler>
                      <Lane><Wave index={c} /></Lane>
                      <LaneTail />
                    </Channel>
                  </ChannelStack>
                ))}
              </Channels>
            </Track>
          </TrackPanel>
          <VScroll>
            <ScrollArrow aria-label="Nach oben"><ScrollChevron d="M1 7l4-4 4 4" /></ScrollArrow>
            <VThumb $grow={1} />
            <ScrollArrow aria-label="Nach unten"><ScrollChevron d="M1 2l4 4 4-4" /></ScrollArrow>
          </VScroll>
        </Workspace>
        <HScroll>
          <ScrollArrow aria-label="Nach links"><ScrollChevron d="M7 1L3 5l4 4" /></ScrollArrow>
          <ScrollThumb $grow={596} />
          <ScrollRest $grow={141} />
          <ScrollArrow aria-label="Nach rechts"><ScrollChevron d="M3 1l4 4-4 4" /></ScrollArrow>
        </HScroll>

        <SelectionBar>
          <Grip />
          <Field $gap={1}>
            <FieldLabel htmlFor="rate">Projektfrequenz (Hz):</FieldLabel>
            <SelectBox $width={80} $large $white>
              <ComboInput id="rate" defaultValue="48000" />
              <Chevron />
            </SelectBox>
          </Field>
          <Divider />
          <Field $gap={6}>
            <FieldLabel htmlFor="snap">Einrasten:</FieldLabel>
            <Drop id="snap" value="Aus" width={83} large />
          </Field>
          <Field $gap={6}>
            <FieldLabel as="span">Anfang der Auswahl:</FieldLabel>
            <TimeField label="Anfang der Auswahl" />
          </Field>
          <Field>
            <Radios>
              {["Ende", "Länge"].map((name) => (
                <RadioLabel key={name}>
                  <Radio type="radio" name="end" checked={end === name} onChange={() => setEnd(name)} />
                  {name}
                </RadioLabel>
              ))}
            </Radios>
            <TimeField label="Ende der Auswahl" />
          </Field>
          <Divider />
          <Field>
            <FieldLabel as="span">Audioposition:</FieldLabel>
            <TimeField label="Audioposition" />
          </Field>
        </SelectionBar>

        <StatusBar>
          <StatusCell $grow="0 0 128px">Gestoppt Pausiert.</StatusCell>
          <StatusCell $grow="1" />
          <StatusCell $grow="0 0 150px">
            <svg width="12" height="12" fill="#b8b8b8"><path d="M8 1h2v2H8zM5 4h2v2H5zM8 4h2v2H8zM2 7h2v2H2zM5 7h2v2H5zM8 7h2v2H8z" /></svg>
          </StatusCell>
        </StatusBar>
      </Window>
    </>
  );
}
